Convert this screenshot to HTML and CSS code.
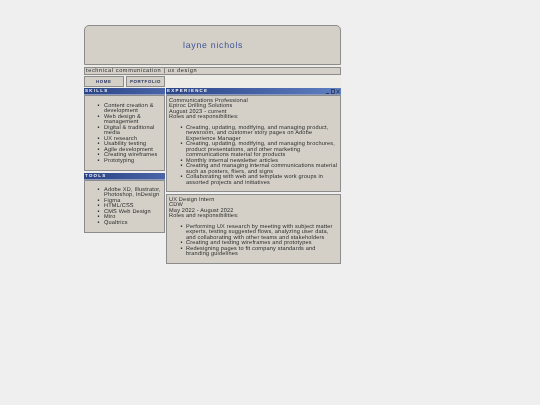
FILE: index.html
```html
<!DOCTYPE html>
<html lang="en">
<head>
<meta charset="utf-8">
<title>layne nichols</title>
<link rel="stylesheet" href="styles.css">
</head>
<body>
<div class="page">
  <header class="banner"><h1>layne nichols</h1></header>
  <div class="tagline"><span class="txt">technical communication | ux design</span></div>
  <nav class="nav">
    <a class="tab tab-home"><span class="txt">HOME</span></a>
    <a class="tab tab-portfolio"><span class="txt">PORTFOLIO</span></a>
  </nav>
  <div class="columns">
    <aside class="side">
      <section class="box">
        <h2 class="title"><span class="txt">SKILLS</span></h2>
        <div class="body">
          <ul class="skills">
            <li>Content creation &amp; development</li>
            <li>Web design &amp; management</li>
            <li>Digital &amp; traditional media</li>
            <li>UX research</li>
            <li>Usability testing</li>
            <li>Agile development</li>
            <li>Creating wireframes</li>
            <li>Prototyping</li>
          </ul>
        </div>
      </section>
      <section class="box">
        <h2 class="title"><span class="txt">TOOLS</span></h2>
        <div class="body">
          <ul class="tools">
            <li>Adobe XD, Illustrator, Photoshop, InDesign</li>
            <li>Figma</li>
            <li>HTML/CSS</li>
            <li>CMS Web Design</li>
            <li>Miro</li>
            <li>Qualtrics</li>
          </ul>
        </div>
      </section>
    </aside>
    <main class="main">
      <section class="box">
        <h2 class="title title-window"><span class="txt">EXPERIENCE</span>
          <span class="controls">
            <svg width="14" height="5" viewBox="0 0 14 5"><path d="M0 4.5h3" stroke="#2a3358" fill="none"/><rect x="5.5" y=".5" width="3" height="4" stroke="#2a3358" stroke-width=".8" fill="none"/><path d="M10.5 .5l3 4M13.5 .5l-3 4" stroke="#2a3358" stroke-width=".8" fill="none"/></svg>
          </span>
        </h2>
        <div class="body job">
          <p>Communications Professional<br>Epiroc Drilling Solutions<br>August 2023 - current<br>Roles and responsibilities:</p>
          <ul>
            <li>Creating, updating, modifying, and managing product, newsroom, and customer story pages on Adobe Experience Manager</li>
            <li>Creating, updating, modifying, and managing brochures, product presentations, and other marketing communications material for products</li>
            <li>Monthly internal newsletter articles</li>
            <li>Creating and managing internal communications material such as posters, fliers, and signs</li>
            <li>Collaborating with web and template work groups in assorted projects and initiatives</li>
          </ul>
        </div>
      </section>
      <section class="box">
        <div class="body job">
          <p>UX Design Intern<br>CDW<br>May 2022 - August 2022<br>Roles and responsibilities:</p>
          <ul>
            <li>Performing UX research by meeting with subject matter experts, testing suggested flows, analyzing user data, and collaborating with other teams and stakeholders</li>
            <li>Creating and testing wireframes and prototypes</li>
            <li>Redesigning pages to fit company standards and branding guidelines</li>
          </ul>
        </div>
      </section>
    </main>
  </div>
</div>
</body>
</html>
```
FILE: styles.css
```css
html, body {
  margin: 0;
  padding: 0;
  background: #efefef;
}
body {
  font-family: "Liberation Sans", Arial, sans-serif;
  font-size: 5.6px;
  line-height: 5.45px;
  letter-spacing: 0.18px;
  color: #2c2c2c;
  text-rendering: geometricPrecision;
}
.page {
  width: 257px;
  margin: 25px 0 0 84px;
  background: #eeece6;
}
.txt {
  display: block;
  will-change: transform;
}
.banner {
  height: 38px;
  padding-left: 2px;
  box-sizing: content-box;
  display: flex;
  align-items: center;
  justify-content: center;
  background: #d4d0c8;
  border: 1px solid #8c8c8c;
  border-top-left-radius: 5px;
  border-top-right-radius: 5px;
}
.banner h1 {
  margin: 0;
  font-size: 8.8px;
  font-weight: normal;
  letter-spacing: 0.72px;
  line-height: 10px;
  color: #3f5296;
  will-change: transform;
}
.tagline {
  height: 6px;
  margin-top: 2px;
  padding: 0 1px;
  background: #d4d0c8;
  border: 1px solid #8c8c8c;
  line-height: 6px;
  font-size: 5.6px;
  letter-spacing: 0.61px;
}
.nav {
  display: flex;
  gap: 2px;
  height: 12px;
  margin-top: 1px;
}
.tab {
  box-sizing: border-box;
  height: 11px;
  display: flex;
  align-items: center;
  justify-content: center;
  background: #d4d0c8;
  border: 1px solid #8c8c8c;
  font-size: 4.4px;
  font-weight: bold;
  letter-spacing: 0.6px;
  color: #2a3560;
}
.tab-home { width: 40px; }
.tab-portfolio { width: 39px; }
.columns {
  display: flex;
  gap: 1px;
  align-items: flex-start;
  background: #efefef;
}
.side { width: 81px; }
.main { width: 175px; }
.box { margin-bottom: 2px; }
.title {
  display: flex;
  justify-content: space-between;
  align-items: center;
  margin: 0;
  height: 6px;
  padding: 0 1px;
  background: linear-gradient(90deg, #2b4488, #5f7fc0);
  border-bottom: 1px solid #8a9ac0;
  font-size: 4.4px;
  line-height: 6px;
  font-weight: bold;
  letter-spacing: 1.3px;
  color: #f4f4f4;
}
.side .title { background: linear-gradient(90deg, #2b4488, #4a64a8); }
.controls { display: flex; }
.body {
  background: #d4d0c8;
  border: 1px solid #8c8c8c;
  padding: 2px 2px 3px;
}
.job { padding-top: 3px; padding-bottom: 3px; }
.body p { margin: 0; will-change: transform; }
ul {
  margin: 0;
  padding-left: 17px;
  list-style: none;
  will-change: transform;
}
li { position: relative; }
li::before {
  content: "\2022";
  position: absolute;
  left: -5.5px;
  top: 0;
}
.skills li::before,
.tools li::before { left: -6.5px; }
.job ul { margin-top: 5.45px; margin-bottom: 2px; }
.skills { margin: 6px 0 3px; }
.tools { margin: 5px 0 3px; }
```
